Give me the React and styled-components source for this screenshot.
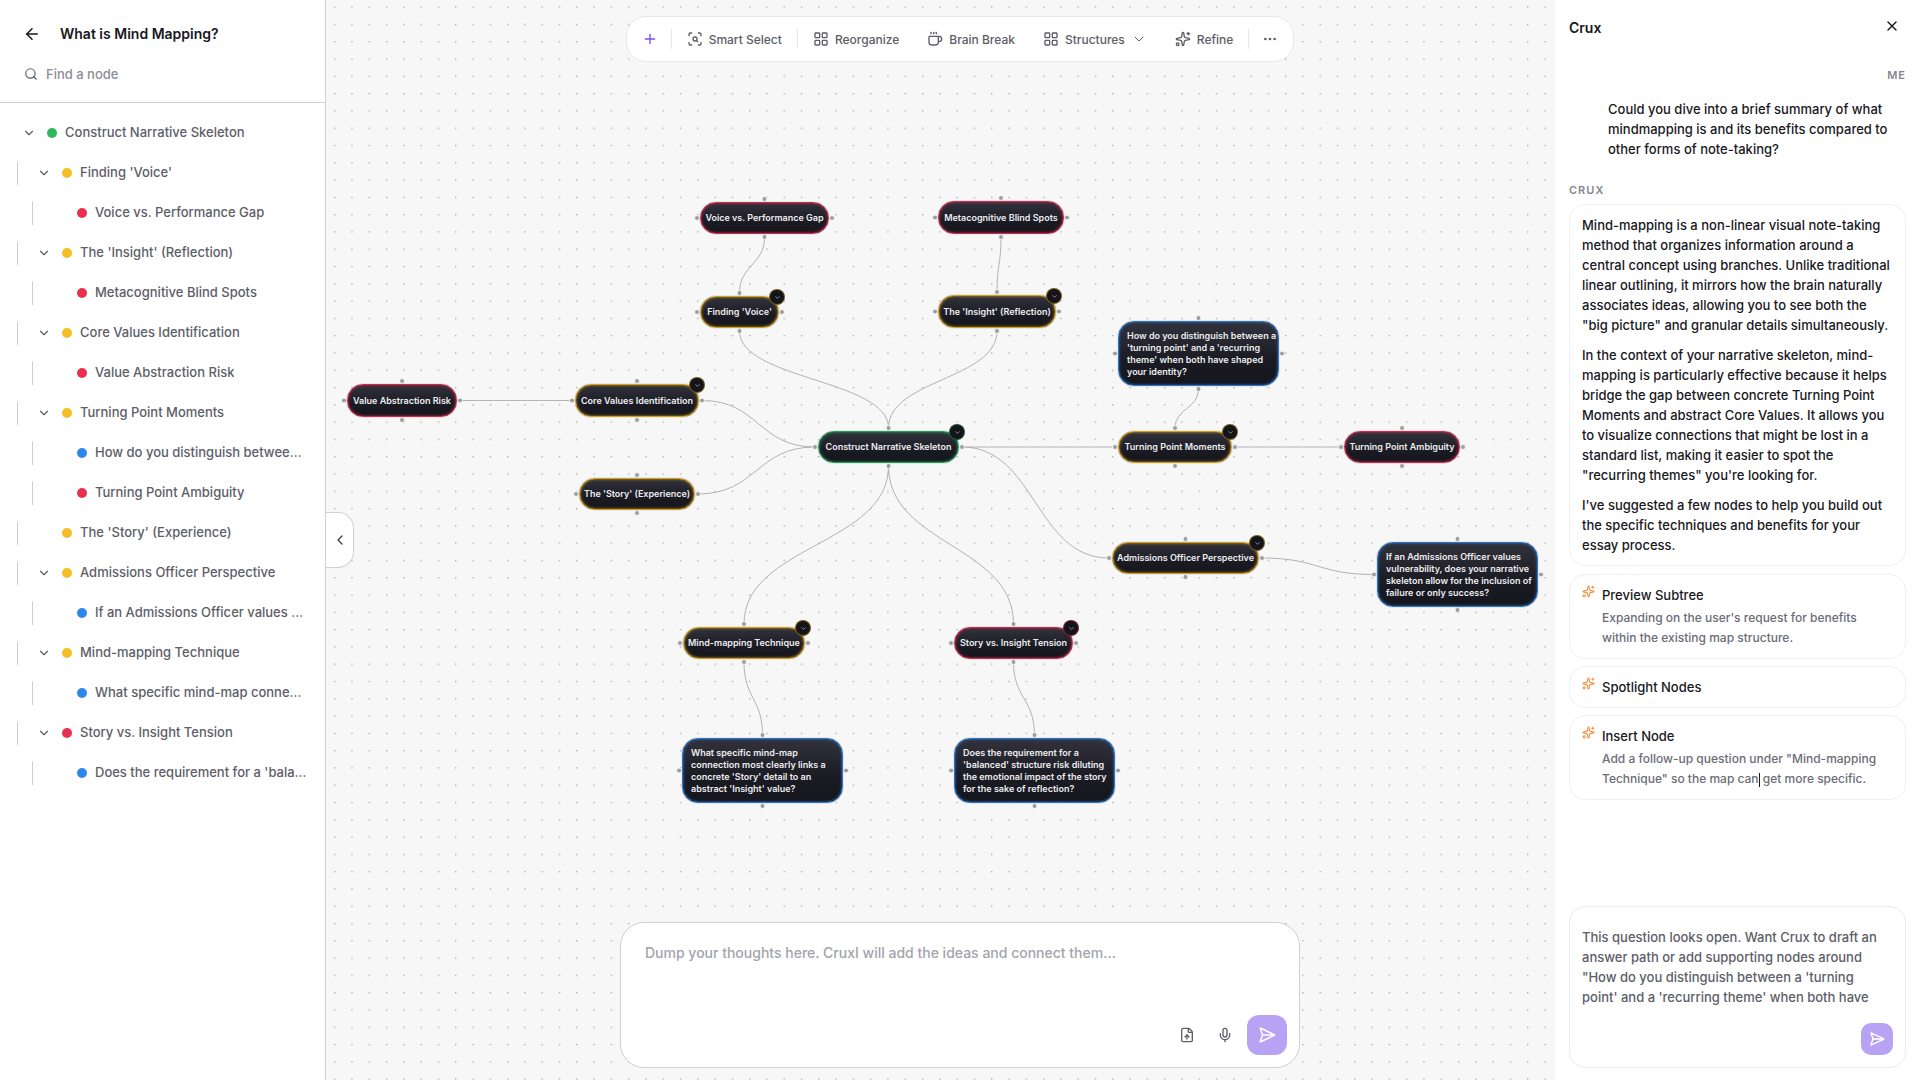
import React, { useState } from 'react'
import styled, { createGlobalStyle } from 'styled-components'
import {
  ArrowLeft,
  ChevronDown,
  ChevronLeft,
  Coffee,
  Ellipsis,
  FileUp,
  LayoutGrid,
  Mic,
  Plus,
  ScanSearch,
  Search,
  SendHorizontal,
  Sparkles,
  X,
} from 'lucide-react'


const colors = {
  green: '#2eb85c',
  yellow: '#f4bc27',
  red: '#e8304f',
  blue: '#2f88e8',
}

const nodeColors = {
  green: '#1f9d55',
  yellow: '#d3a017',
  red: '#cf2a4b',
  blue: '#2a76cc',
}


const tree = [
  { label: 'Construct Narrative Skeleton', color: 'green', level: 0, open: true },
  { label: "Finding 'Voice'", color: 'yellow', level: 1, open: true },
  { label: 'Voice vs. Performance Gap', color: 'red', level: 2 },
  { label: "The 'Insight' (Reflection)", color: 'yellow', level: 1, open: true },
  { label: 'Metacognitive Blind Spots', color: 'red', level: 2 },
  { label: 'Core Values Identification', color: 'yellow', level: 1, open: true },
  { label: 'Value Abstraction Risk', color: 'red', level: 2 },
  { label: 'Turning Point Moments', color: 'yellow', level: 1, open: true },
  { label: "How do you distinguish between a 'turning point' and a 'recurring theme'", color: 'blue', level: 2 },
  { label: 'Turning Point Ambiguity', color: 'red', level: 2 },
  { label: "The 'Story' (Experience)", color: 'yellow', level: 1 },
  { label: 'Admissions Officer Perspective', color: 'yellow', level: 1, open: true },
  { label: 'If an Admissions Officer values vulnerability', color: 'blue', level: 2 },
  { label: 'Mind-mapping Technique', color: 'yellow', level: 1, open: true },
  { label: 'What specific mind-map connection most clearly links', color: 'blue', level: 2 },
  { label: 'Story vs. Insight Tension', color: 'red', level: 1, open: true },
  { label: "Does the requirement for a 'balanced' structure risk", color: 'blue', level: 2 },
]


const nodes = {
  gap: { x: 700, y: 202, w: 129, h: 32, color: 'red', text: 'Voice vs. Performance Gap' },
  blind: { x: 938, y: 201, w: 126, h: 33, color: 'red', text: 'Metacognitive Blind Spots' },
  voice: { x: 700, y: 296, w: 79, h: 32, color: 'yellow', text: "Finding 'Voice'", toggle: true },
  insight: { x: 938, y: 295, w: 118, h: 33, color: 'yellow', text: "The 'Insight' (Reflection)", toggle: true },
  risk: { x: 347, y: 384, w: 110, h: 33, color: 'red', text: 'Value Abstraction Risk' },
  core: { x: 575, y: 384, w: 124, h: 33, color: 'yellow', text: 'Core Values Identification', toggle: true },
  story: { x: 579, y: 478, w: 116, h: 32, color: 'yellow', text: "The 'Story' (Experience)" },
  root: { x: 818, y: 431, w: 141, h: 32, color: 'green', text: 'Construct Narrative Skeleton', toggle: true },
  how: { x: 1118, y: 321, w: 161, h: 65, color: 'blue', text: "How do you distinguish between a\n'turning point' and a 'recurring\ntheme' when both have shaped\nyour identity?" },
  moments: { x: 1118, y: 431, w: 114, h: 32, color: 'yellow', text: 'Turning Point Moments', toggle: true },
  ambiguity: { x: 1344, y: 431, w: 116, h: 32, color: 'red', text: 'Turning Point Ambiguity' },
  officer: { x: 1112, y: 542, w: 147, h: 32, color: 'yellow', text: 'Admissions Officer Perspective', toggle: true },
  values: { x: 1377, y: 542, w: 161, h: 65, color: 'blue', text: 'If an Admissions Officer values\nvulnerability, does your narrative\nskeleton allow for the inclusion of\nfailure or only success?' },
  technique: { x: 683, y: 627, w: 122, h: 32, color: 'yellow', text: 'Mind-mapping Technique', toggle: true },
  tension: { x: 954, y: 627, w: 119, h: 32, color: 'red', text: 'Story vs. Insight Tension', toggle: true },
  specific: { x: 682, y: 738, w: 161, h: 65, color: 'blue', text: "What specific mind-map\nconnection most clearly links a\nconcrete 'Story' detail to an\nabstract 'Insight' value?" },
  balanced: { x: 954, y: 738, w: 161, h: 65, color: 'blue', text: "Does the requirement for a\n'balanced' structure risk diluting\nthe emotional impact of the story\nfor the sake of reflection?" },
}

const edges = [
  ['gap', 'bottom', 'voice', 'top'],
  ['blind', 'bottom', 'insight', 'top'],
  ['voice', 'bottom', 'root', 'top'],
  ['insight', 'bottom', 'root', 'top'],
  ['risk', 'right', 'core', 'left'],
  ['core', 'right', 'root', 'left'],
  ['story', 'right', 'root', 'left'],
  ['root', 'right', 'moments', 'left'],
  ['moments', 'top', 'how', 'bottom'],
  ['moments', 'right', 'ambiguity', 'left'],
  ['root', 'right', 'officer', 'left'],
  ['officer', 'right', 'values', 'left'],
  ['root', 'bottom', 'technique', 'top'],
  ['root', 'bottom', 'tension', 'top'],
  ['technique', 'bottom', 'specific', 'top'],
  ['tension', 'bottom', 'balanced', 'top'],
]

const HANDLE_GAP = 3

const handle = (node, side) => {
  const cx = node.x + node.w / 2
  const cy = node.y + node.h / 2

  switch (side) {
    case 'top': return [cx, node.y - HANDLE_GAP]
    case 'bottom': return [cx, node.y + node.h + HANDLE_GAP]
    case 'left': return [node.x - HANDLE_GAP, cy]
    default: return [node.x + node.w + HANDLE_GAP, cy]
  }
}

const edgePath = ([from, fromSide, to, toSide]) => {
  const [x1, y1] = handle(nodes[from], fromSide)
  const [x2, y2] = handle(nodes[to], toSide)

  if (fromSide === 'left' || fromSide === 'right') {
    const mx = (x1 + x2) / 2
    return `M${x1},${y1} C${mx},${y1} ${mx},${y2} ${x2},${y2}`
  }

  const my = (y1 + y2) / 2
  return `M${x1},${y1} C${x1},${my} ${x2},${my} ${x2},${y2}`
}


const GlobalStyle = createGlobalStyle`
  * {
    box-sizing: border-box;
  }

  body {
    margin: 0;
    font-family: Inter, sans-serif;
    font-size: 13px;
    font-weight: 500;
    color: #18181d;
    background: #f7f7f7;
  }

  button, input, textarea {
    font: inherit;
    color: inherit;
    margin: 0;
    padding: 0;
    border: 0;
    background: none;
    outline: none;
  }

  button {
    cursor: pointer;
  }

  svg {
    flex: none;
  }

  h1, h2, h3, p, ul {
    margin: 0;
    padding: 0;
  }
`


const Page = styled.div`
  display: grid;
  grid-template-columns: 326px minmax(0, 1fr) 365px;
  grid-template-rows: 100vh;
  overflow: hidden;
`


const Canvas = styled.main`
  grid-row: 1;
  grid-column: 1 / -1;
  position: relative;
  overflow: hidden;
`


const Wires = styled.svg`
  display: block;
  width: 100%;
  height: 100%;
`


const MapNode = styled.div`
  position: absolute;
  display: flex;
  align-items: center;
  justify-content: ${props => props.$block ? 'flex-start' : 'center'};
  padding: 0 ${props => props.$block ? 8 : 4}px;
  border: 1px solid ${props => nodeColors[props.$color]};
  border-radius: 16px;
  background: linear-gradient(#32323c, #1b1b24 60%, #15151c);
  box-shadow: inset 0 0 3px ${props => nodeColors[props.$color]}, 0 0 1px #55555f;
  color: #ededf0;
  font-size: 9px;
  font-weight: 600;
  line-height: 12px;
  white-space: pre;
`


const NodeToggle = styled.button`
  position: absolute;
  top: -8px;
  right: -7px;
  display: flex;
  align-items: center;
  justify-content: center;
  width: 16px;
  height: 16px;
  border: 1px solid ${props => nodeColors[props.$color]}80;
  border-radius: 50%;
  background: #14141b;
  color: #d5d5da;
`


const Sidebar = styled.aside`
  grid-row: 1;
  grid-column: 1;
  z-index: 1;
  display: flex;
  flex-direction: column;
  border-right: 1px solid #cfcfd8;
  background: #fff;
`


const SidebarHead = styled.header`
  display: flex;
  flex-direction: column;
  gap: 20px;
  height: 103px;
  padding: 24px 24px 0;
  border-bottom: 1px solid #cfcfd8;
`


const TitleRow = styled.div`
  display: flex;
  align-items: center;
  gap: 20px;
`


const IconButton = styled.button`
  display: flex;
  align-items: center;
  justify-content: center;
  width: 16px;
  height: 16px;
  color: ${props => props.$color || '#18181d'};
`


const Title = styled.h1`
  font-size: 14px;
  font-weight: 600;
  line-height: 20px;
`


const SearchRow = styled.label`
  display: flex;
  align-items: center;
  gap: 8px;
  color: #5d5e68;
`


const SearchInput = styled.input`
  flex: 1;
  min-width: 0;
  font-size: 13px;
  line-height: 20px;

  &::placeholder {
    color: #8d8e97;
    opacity: 1;
  }
`


const Tree = styled.ul`
  display: flex;
  flex-direction: column;
  padding: 10px 18px 10px 17px;
  list-style: none;
`


const TreeRow = styled.li`
  display: flex;
  align-items: center;
  height: 40px;
  padding-left: ${props => Math.max(props.$level - 1, 0) * 15}px;
`


const Guide = styled.span`
  flex: none;
  width: 1px;
  height: 24px;
  margin-right: 14px;
  background: #cfcfd8;
`


const TreeToggle = styled.button`
  display: flex;
  align-items: center;
  justify-content: center;
  flex: none;
  width: 24px;
  height: 24px;
  color: #5d5e68;
`


const TreeSpacer = styled.span`
  flex: none;
  width: 24px;
`


const Dot = styled.span`
  flex: none;
  width: 10px;
  height: 10px;
  margin: 0 8px 0 6px;
  border-radius: 50%;
  background: ${props => colors[props.$color]};
`


const TreeLabel = styled.span`
  overflow: hidden;
  padding-bottom: 2px;
  color: #5d5e68;
  line-height: 20px;
  text-overflow: ellipsis;
  white-space: nowrap;
`


const CollapseTab = styled.button`
  grid-row: 1;
  grid-column: 2;
  z-index: 1;
  justify-self: start;
  align-self: center;
  display: flex;
  align-items: center;
  justify-content: center;
  width: 28px;
  height: 56px;
  border: 1px solid #cfcfd8;
  border-left: 0;
  border-radius: 0 16px 16px 0;
  background: #fff;
  color: #3d3e47;
`


const Toolbar = styled.nav`
  grid-row: 1;
  grid-column: 1 / -1;
  z-index: 1;
  justify-self: center;
  align-self: start;
  display: flex;
  align-items: center;
  height: 46px;
  margin-top: 16px;
  padding: 0 3px;
  border: 1px solid #e8e8ec;
  border-radius: 20px;
  background: #fff;
`


const ToolButton = styled.button`
  display: flex;
  align-items: center;
  gap: 6px;
  height: 32px;
  padding: 0 ${props => props.$square ? 12 : 14}px;
  color: ${props => props.$accent ? '#7c4ff0' : '#5d5e68'};
  font-size: 12px;
`


const ToolDivider = styled.span`
  width: 1px;
  height: 20px;
  margin: 0 1px;
  background: #e4e4e9;
`


const Composer = styled.form`
  grid-row: 1;
  grid-column: 1 / -1;
  z-index: 1;
  justify-self: center;
  align-self: end;
  display: flex;
  flex-direction: column;
  width: 680px;
  height: 146px;
  margin-bottom: 12px;
  padding: 20px 12px 12px 24px;
  border: 1px solid #cfcfd8;
  border-radius: 24px;
  background: #fff;
`


const ComposerInput = styled.textarea`
  flex: 1;
  resize: none;
  font-size: 14px;
  line-height: 20px;

  &::placeholder {
    color: #a3a4ab;
    opacity: 1;
  }
`


const ComposerActions = styled.div`
  display: flex;
  align-items: center;
  justify-content: flex-end;
  gap: 14px;
`


const ComposerTools = styled.div`
  display: flex;
  gap: 22px;
`


const SendButton = styled.button`
  display: flex;
  align-items: center;
  justify-content: center;
  width: ${props => props.$size}px;
  height: ${props => props.$size}px;
  border-radius: ${props => props.$size > 32 ? 12 : 10}px;
  background: #b7a2f4;
  color: #fff;
`


const Panel = styled.aside`
  grid-row: 1;
  grid-column: 3;
  z-index: 1;
  display: flex;
  flex-direction: column;
  padding: 18px 14px 12px;
  background: #fff;
`


const PanelHead = styled.header`
  display: flex;
  align-items: flex-start;
  justify-content: space-between;
  padding-right: 6px;
`


const Author = styled.span`
  align-self: ${props => props.$mine ? 'flex-end' : 'flex-start'};
  margin-top: ${props => props.$mine ? 29 : 23}px;
  color: #85868f;
  font-size: 11px;
  font-weight: 600;
  letter-spacing: 1px;
  line-height: 16px;
`


const Question = styled.p`
  margin-top: 16px;
  padding: 0 8px 0 39px;
  line-height: 20px;
`


const Card = styled.section`
  padding: 10px 12px;
  border: 1px solid #f0f0f2;
  border-radius: 16px;
`


const Reply = styled(Card)`
  display: flex;
  flex-direction: column;
  gap: 10px;
  margin: 6px 0 8px;
  line-height: 20px;
`


const Suggestions = styled.div`
  display: flex;
  flex-direction: column;
  gap: 7px;
`


const Suggestion = styled(Card)`
  display: flex;
  align-items: flex-start;
  gap: 7px;
  color: #ff8a35;
`


const SuggestionTitle = styled.h3`
  color: #18181d;
  font-size: 13px;
  font-weight: 500;
  line-height: 20px;
`


const SuggestionText = styled.p`
  margin-top: 3px;
  color: #6b6c76;
  font-size: 12px;
  line-height: 20px;
`


const Caret = styled.span`
  display: inline-block;
  width: 1px;
  height: 14px;
  background: #18181d;
  vertical-align: middle;
`


const Draft = styled.form`
  display: flex;
  flex-direction: column;
  height: 162px;
  margin-top: auto;
  padding: 20px 12px 12px;
  border: 1px solid #ececef;
  border-radius: 16px;
`


const DraftInput = styled.textarea`
  height: 80px;
  padding-right: 4px;
  overflow: hidden;
  resize: none;
  color: #5d5e68;
  line-height: 20px;
`


const DraftActions = styled.div`
  display: flex;
  justify-content: flex-end;
  margin-top: auto;
`


const App = () => {
  const [query, setQuery] = useState('')
  const [thought, setThought] = useState('')
  const [draft, setDraft] = useState(
    "This question looks open. Want Crux to draft an answer path or add supporting nodes around \"How do you distinguish between a 'turning point' and a 'recurring theme' when both have"
  )

  return (
    <React.Fragment>
      <GlobalStyle />

      <Page>
        <Canvas>
          <Wires>
            <defs>
              <pattern id="dots" x="334" y="6.500" width="17.290" height="17.290" patternUnits="userSpaceOnUse">
                <circle cx="0.750" cy="0.750" r="0.750" fill="#9c9ca3" />
              </pattern>
            </defs>
            <rect width="100%" height="100%" fill="#f7f7f7" />
            <rect width="100%" height="100%" fill="url(#dots)" />

            {
              edges.map(edge => (
                <path key={edge.join()} d={edgePath(edge)} fill="none" stroke="#b1b1b7" strokeWidth="1" />
              ))
            }

            {
              Object.keys(nodes).map(id => ['top', 'right', 'bottom', 'left'].map(side => {
                const [cx, cy] = handle(nodes[id], side)
                return <circle key={id + side} cx={cx} cy={cy} r="2.500" fill="#9d9da6" stroke="#f7f7f7" strokeWidth="1" />
              }))
            }
          </Wires>

          {
            Object.entries(nodes).map(([id, node]) => (
              <MapNode key={id} $color={node.color} $block={node.h > 40}
                style={{ left: node.x, top: node.y, width: node.w, height: node.h }}>
                {node.text}
                {
                  node.toggle && <NodeToggle $color={node.color} aria-label="Collapse branch">
                    <ChevronDown size={7} />
                  </NodeToggle>
                }
              </MapNode>
            ))
          }
        </Canvas>

        <Sidebar>
          <SidebarHead>
            <TitleRow>
              <IconButton aria-label="Back"><ArrowLeft size={18} strokeWidth={2} /></IconButton>
              <Title>What is Mind Mapping?</Title>
            </TitleRow>
            <SearchRow>
              <Search size={14} />
              <SearchInput
                aria-label="Find a node"
                placeholder="Find a node"
                value={query}
                onChange={e => setQuery(e.target.value)} />
            </SearchRow>
          </SidebarHead>

          <Tree>
            {
              tree.map(item => (
                <TreeRow key={item.label} $level={item.level}>
                  {item.level > 0 && <Guide />}
                  {
                    item.open
                      ? <TreeToggle aria-label={`Toggle ${item.label}`}><ChevronDown size={14} /></TreeToggle>
                      : <TreeSpacer />
                  }
                  <Dot $color={item.color} />
                  <TreeLabel>{item.label}</TreeLabel>
                </TreeRow>
              ))
            }
          </Tree>
        </Sidebar>

        <CollapseTab aria-label="Collapse sidebar"><ChevronLeft size={16} /></CollapseTab>

        <Toolbar>
          <ToolButton $accent $square aria-label="Add node"><Plus size={16} /></ToolButton>
          <ToolDivider />
          <ToolButton><ScanSearch size={16} />Smart Select</ToolButton>
          <ToolDivider />
          <ToolButton><LayoutGrid size={16} />Reorganize</ToolButton>
          <ToolButton><Coffee size={16} />Brain Break</ToolButton>
          <ToolButton><LayoutGrid size={16} />Structures<ChevronDown size={16} strokeWidth={1.5} /></ToolButton>
          <ToolButton><Sparkles size={16} />Refine</ToolButton>
          <ToolDivider />
          <ToolButton $square aria-label="More"><Ellipsis size={16} /></ToolButton>
        </Toolbar>

        <Composer onSubmit={e => e.preventDefault()}>
          <ComposerInput
            aria-label="Thoughts"
            placeholder="Dump your thoughts here. CruxI will add the ideas and connect them..."
            value={thought}
            onChange={e => setThought(e.target.value)} />
          <ComposerActions>
            <ComposerTools>
              <IconButton type="button" $color="#5d5e68" aria-label="Upload file"><FileUp size={16} /></IconButton>
              <IconButton type="button" $color="#5d5e68" aria-label="Record"><Mic size={16} /></IconButton>
            </ComposerTools>
            <SendButton $size={40} aria-label="Send"><SendHorizontal size={18} /></SendButton>
          </ComposerActions>
        </Composer>

        <Panel>
          <PanelHead>
            <Title as="h2">Crux</Title>
            <IconButton aria-label="Close"><X size={16} /></IconButton>
          </PanelHead>

          <Author $mine>ME</Author>
          <Question>
            Could you dive into a brief summary of what mindmapping is and its benefits compared to other forms of note-taking?
          </Question>

          <Author>CRUX</Author>
          <Reply>
            <p>
              Mind-mapping is a non-linear visual note-taking method that organizes information around a central concept using branches. Unlike traditional linear outlining, it mirrors how the brain naturally associates ideas, allowing you to see both the "big picture" and granular details simultaneously.
            </p>
            <p>
              In the context of your narrative skeleton, mind-mapping is particularly effective because it helps bridge the gap between concrete Turning Point Moments and abstract Core Values. It allows you to visualize connections that might be lost in a standard list, making it easier to spot the "recurring themes" you're looking for.
            </p>
            <p>
              I've suggested a few nodes to help you build out the specific techniques and benefits for your essay process.
            </p>
          </Reply>

          <Suggestions>
            <Suggestion>
              <Sparkles size={13} />
              <div>
                <SuggestionTitle>Preview Subtree</SuggestionTitle>
                <SuggestionText>Expanding on the user's request for benefits within the existing map structure.</SuggestionText>
              </div>
            </Suggestion>
            <Suggestion>
              <Sparkles size={13} />
              <SuggestionTitle>Spotlight Nodes</SuggestionTitle>
            </Suggestion>
            <Suggestion>
              <Sparkles size={13} />
              <div>
                <SuggestionTitle>Insert Node</SuggestionTitle>
                <SuggestionText>
                  Add a follow-up question under "Mind-mapping Technique" so the map can<Caret /> get more specific.
                </SuggestionText>
              </div>
            </Suggestion>
          </Suggestions>

          <Draft onSubmit={e => e.preventDefault()}>
            <DraftInput aria-label="Message Crux" value={draft} onChange={e => setDraft(e.target.value)} />
            <DraftActions>
              <SendButton $size={32} aria-label="Send message"><SendHorizontal size={16} /></SendButton>
            </DraftActions>
          </Draft>
        </Panel>
      </Page>
    </React.Fragment>
  )
}

export default App
